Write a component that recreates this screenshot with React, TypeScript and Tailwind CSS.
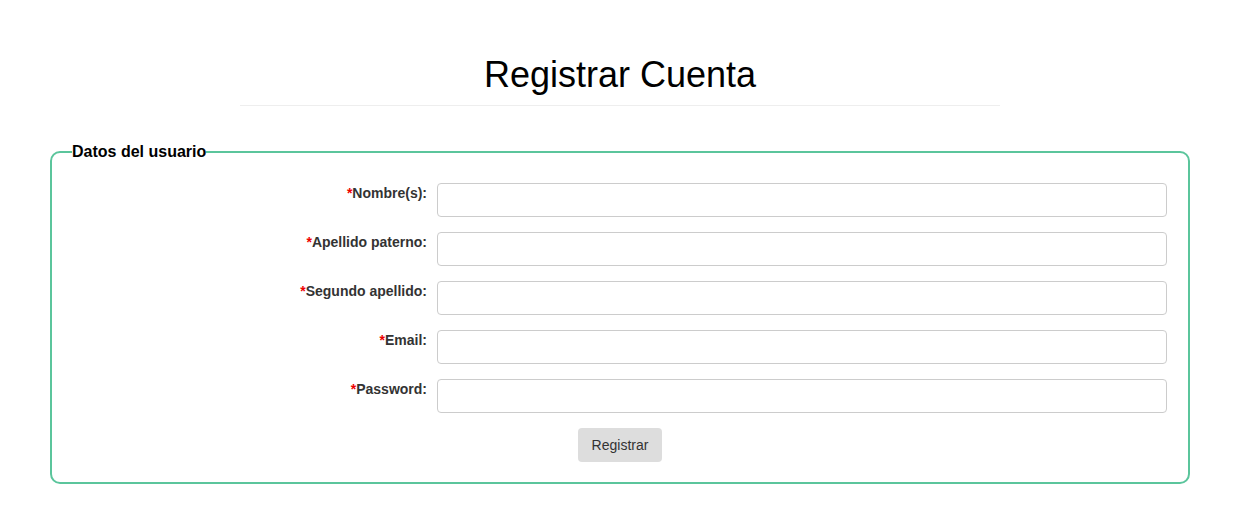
import React from 'react';

const fields = ['Nombre(s):', 'Apellido paterno:', 'Segundo apellido:', 'Email:', 'Password:'];

export default function App() {
  return (
    <div className="w-[1240px] bg-white pb-[27px] font-['Liberation_Sans',Arial,sans-serif] text-[#333]">
      <div className="pt-[55px] flex flex-col items-center">
        <h1 className="text-[36px] leading-[40px] font-normal text-black">Registrar Cuenta</h1>
        <div className="mt-[10px] h-px w-[760px] bg-[#eee]" />
      </div>
      <div className="px-[50px] mt-[34px]">
        <fieldset className="border-2 border-[#5bc59c] rounded-[10px] pr-[20px] pb-[20px]">
          <legend className="ml-[20px] text-[16px] leading-[24px] font-bold text-black">Datos del usuario</legend>
          <div className="mt-[19px] grid grid-cols-[375px_730px] gap-x-[10px] gap-y-[15px]">
            {fields.map((f) => (
              <React.Fragment key={f}>
                <label className="text-right text-[14px] leading-[20px] font-bold text-[#333]">
                  <span className="text-[#e00]">*</span>
                  {f}
                </label>
                <input
                  type={f === 'Password:' ? 'password' : 'text'}
                  className="h-[34px] w-full border border-[#ccc] rounded-[4px] bg-white px-3 text-[14px]"
                />
              </React.Fragment>
            ))}
          </div>
          <div className="mt-[15px] flex justify-center pl-[20px]">
            <button className="h-[34px] w-[84px] rounded-[4px] bg-[#ddd] text-[14px] text-[#333]">Registrar</button>
          </div>
        </fieldset>
      </div>
    </div>
  );
}
